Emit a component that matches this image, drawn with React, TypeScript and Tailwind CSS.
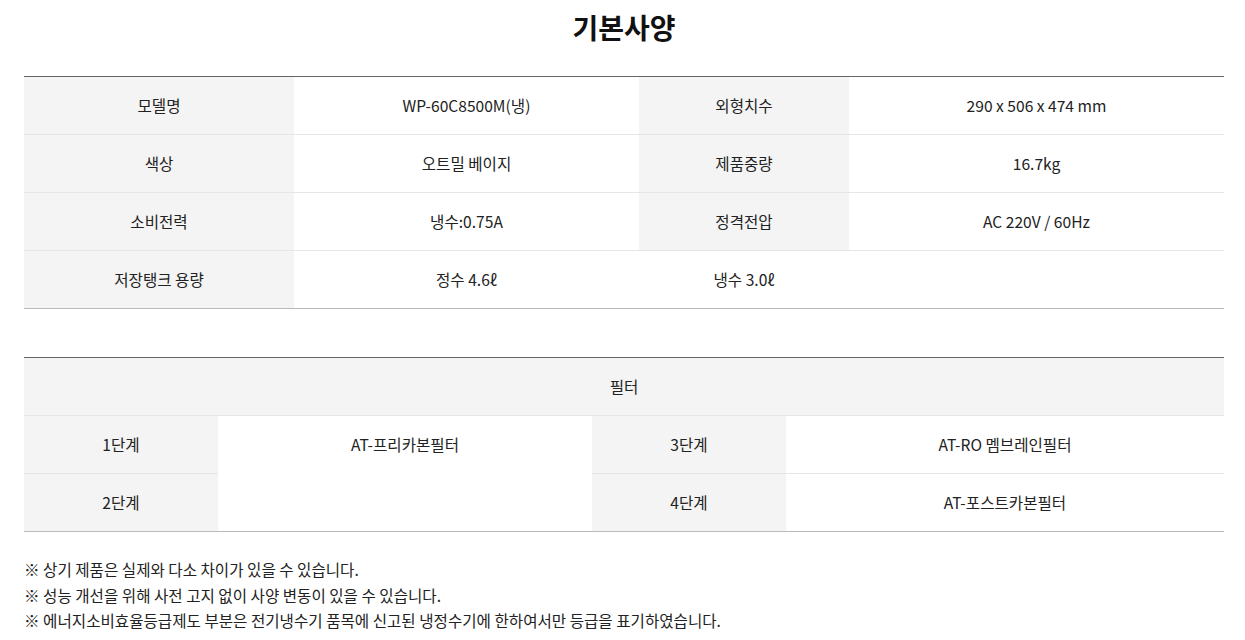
const specRows = [
  ["모델명", "WP-60C8500M(냉)", "외형치수", "290 x 506 x 474 mm"],
  ["색상", "오트밀 베이지", "제품중량", "16.7kg"],
  ["소비전력", "냉수:0.75A", "정격전압", "AC 220V / 60Hz"],
];

const notes = [
  "※ 상기 제품은 실제와 다소 차이가 있을 수 있습니다.",
  "※ 성능 개선을 위해 사전 고지 없이 사양 변동이 있을 수 있습니다.",
  "※ 에너지소비효율등급제도 부분은 전기냉수기 품목에 신고된 냉정수기에 한하여서만 등급을 표기하였습니다.",
];

const font = { fontFamily: '"Noto Sans CJK KR", "Noto Sans", sans-serif' };

function Cell({
  children,
  gray,
  last,
}: {
  children?: React.ReactNode;
  gray?: boolean;
  last?: boolean;
}) {
  return (
    <div
      className={
        "flex items-center justify-center text-[15.6px] text-[#222] " +
        (gray ? "bg-[#f4f4f4] " : "bg-white ") +
        (last ? "h-[57px]" : "h-[58px] border-b border-[#e6e6e6]")
      }
    >
      {children}
    </div>
  );
}

export default function App() {
  return (
    <div className="min-h-[640px] bg-white pl-[24px] pr-[21px]" style={font}>
      <h2 className="pt-[8px] pb-[30px] text-center text-[28px] font-bold leading-[38px] text-[#111]">
        기본사양
      </h2>

      <div className="grid grid-cols-[270px_345px_210px_1fr] border-y border-t-[#666] border-b-[#bbb]">
        {specRows.map((row) => (
          <div key={row[0]} className="contents">
            <Cell gray>{row[0]}</Cell>
            <Cell>{row[1]}</Cell>
            <Cell gray>{row[2]}</Cell>
            <Cell>{row[3]}</Cell>
          </div>
        ))}
        <Cell gray last>
          저장탱크 용량
        </Cell>
        <Cell last>정수 4.6ℓ</Cell>
        <Cell last>냉수 3.0ℓ</Cell>
        <Cell last />
      </div>

      <div className="mt-[48px] grid grid-cols-[194px_374px_194px_1fr] border-y border-t-[#666] border-b-[#bbb]">
        <div className="col-span-4">
          <Cell gray>필터</Cell>
        </div>
        <Cell gray>1단계</Cell>
        <div className="row-span-2 bg-white">
          <div className="flex h-[57px] items-center justify-center text-[15.6px] text-[#222]">
            AT-프리카본필터
          </div>
        </div>
        <Cell gray>3단계</Cell>
        <Cell>AT-RO 멤브레인필터</Cell>
        <Cell gray last>
          2단계
        </Cell>
        <Cell gray last>
          4단계
        </Cell>
        <Cell last>AT-포스트카본필터</Cell>
      </div>

      <ul className="mt-[25px] text-[15.6px] leading-[25.5px] text-[#222]">
        {notes.map((n) => (
          <li key={n}>{n}</li>
        ))}
      </ul>
    </div>
  );
}
